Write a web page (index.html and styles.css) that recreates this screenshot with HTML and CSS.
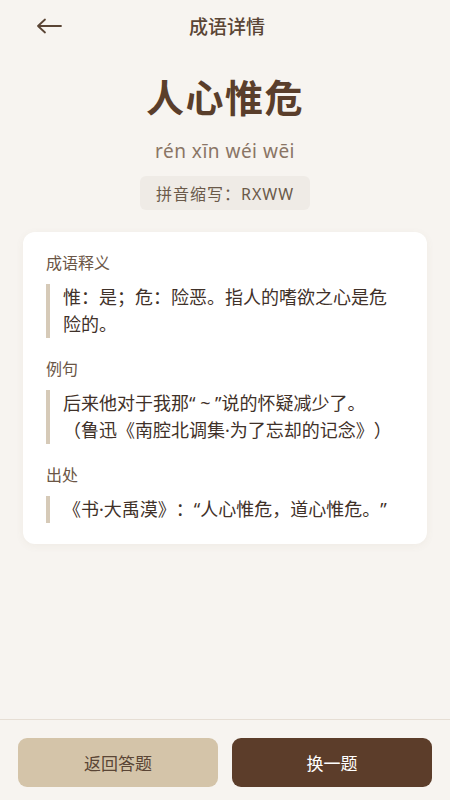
FILE: index.html
```html
<!DOCTYPE html>
<html lang="zh">
<head>
<meta charset="utf-8">
<link rel="stylesheet" href="styles.css">
</head>
<body>
<div class="page">
  <header class="topbar">
    <button class="back" aria-label="返回">
      <svg width="26" height="16" viewBox="0 0 26 16"><path d="M25 8H2M9 1.5L2 8l7 6.5" fill="none" stroke="#5a4535" stroke-width="1.8" stroke-linecap="round" stroke-linejoin="round"/></svg>
    </button>
    <div class="title">成语详情</div>
    <div class="spacer"></div>
  </header>

  <section class="hero">
    <h1 class="idiom">人心惟危</h1>
    <div class="pinyin">rén xīn wéi wēi</div>
    <div class="abbr">拼音缩写：RXWW</div>
  </section>

  <section class="card">
    <div class="block">
      <div class="label">成语释义</div>
      <div class="quote">惟：是；危：险恶。指人的嗜欲之心是危险的。</div>
    </div>
    <div class="block">
      <div class="label">例句</div>
      <div class="quote">后来他对于我那“ ~ ”说的怀疑减少了。<br>（鲁迅《南腔北调集·为了忘却的记念》）</div>
    </div>
    <div class="block">
      <div class="label">出处</div>
      <div class="quote">《书·大禹漠》：“人心惟危，道心惟危。”</div>
    </div>
  </section>

  <div class="fill"></div>

  <footer class="bottombar">
    <button class="btn btn-light">返回答题</button>
    <button class="btn btn-dark">换一题</button>
  </footer>
</div>
</body>
</html>
```

FILE: styles.css
```css
* { box-sizing: border-box; }
html, body { margin: 0; padding: 0; }
body {
  background: #f7f4f0;
  font-family: "Noto Sans", "Noto Sans CJK SC", sans-serif;
  color: #4a3a2e;
}
.page {
  width: 450px;
  height: 800px;
  display: flex;
  flex-direction: column;
}
.topbar {
  height: 52px;
  display: flex;
  align-items: center;
  padding: 0 20px 0 36px;
}
.back {
  width: 30px;
  height: 30px;
  padding: 0;
  border: 0;
  background: none;
  display: flex;
  align-items: center;
}
.title {
  flex: 1;
  text-align: center;
  font-size: 19px;
  color: #5a4535;
  margin-right: 12px;
  font-weight: 500;
}
.spacer { width: 30px; }

.hero {
  display: flex;
  flex-direction: column;
  align-items: center;
  padding-top: 17px;
}
.idiom {
  margin: 0;
  font-size: 38px;
  line-height: 56px;
  font-weight: 700;
  color: #5a3e2b;
  letter-spacing: 1.5px;
}
.pinyin {
  margin-top: 13px;
  font-family: "Noto Sans", sans-serif;
  font-size: 19px;
  line-height: 26px;
  color: #8a7565;
  letter-spacing: 0.5px;
}
.abbr {
  margin-top: 12px;
  height: 34px;
  padding: 0 16px;
  display: flex;
  align-items: center;
  background: #efebe6;
  border-radius: 6px;
  font-size: 16px;
  color: #6b5a4a;
  letter-spacing: 1px;
}

.card {
  margin: 22px 23px 0;
  background: #fff;
  border-radius: 12px;
  padding: 20px 23px 21px;
  box-shadow: 0 2px 8px rgba(120, 95, 70, 0.06);
  display: flex;
  flex-direction: column;
  gap: 20px;
}
.label {
  font-size: 16px;
  line-height: 22px;
  color: #6b5646;
  margin-bottom: 10px;
}
.quote {
  border-left: 4px solid #d6cab8;
  padding-left: 13px;
  font-size: 18px;
  line-height: 27px;
  color: #3f3129;
  text-spacing-trim: space-all;
}
.fill { flex: 1; }
.bottombar {
  border-top: 1px solid #e6ded4;
  padding: 18px 18px 13px;
  display: flex;
  gap: 14px;
}
.btn {
  flex: 1;
  height: 49px;
  border: 0;
  border-radius: 9px;
  font-family: "Noto Sans CJK SC", sans-serif;
  font-size: 17px;
}
.btn-light { background: #d4c4a9; color: #5a4535; }
.btn-dark { background: #5c3d2a; color: #fff; }
```
